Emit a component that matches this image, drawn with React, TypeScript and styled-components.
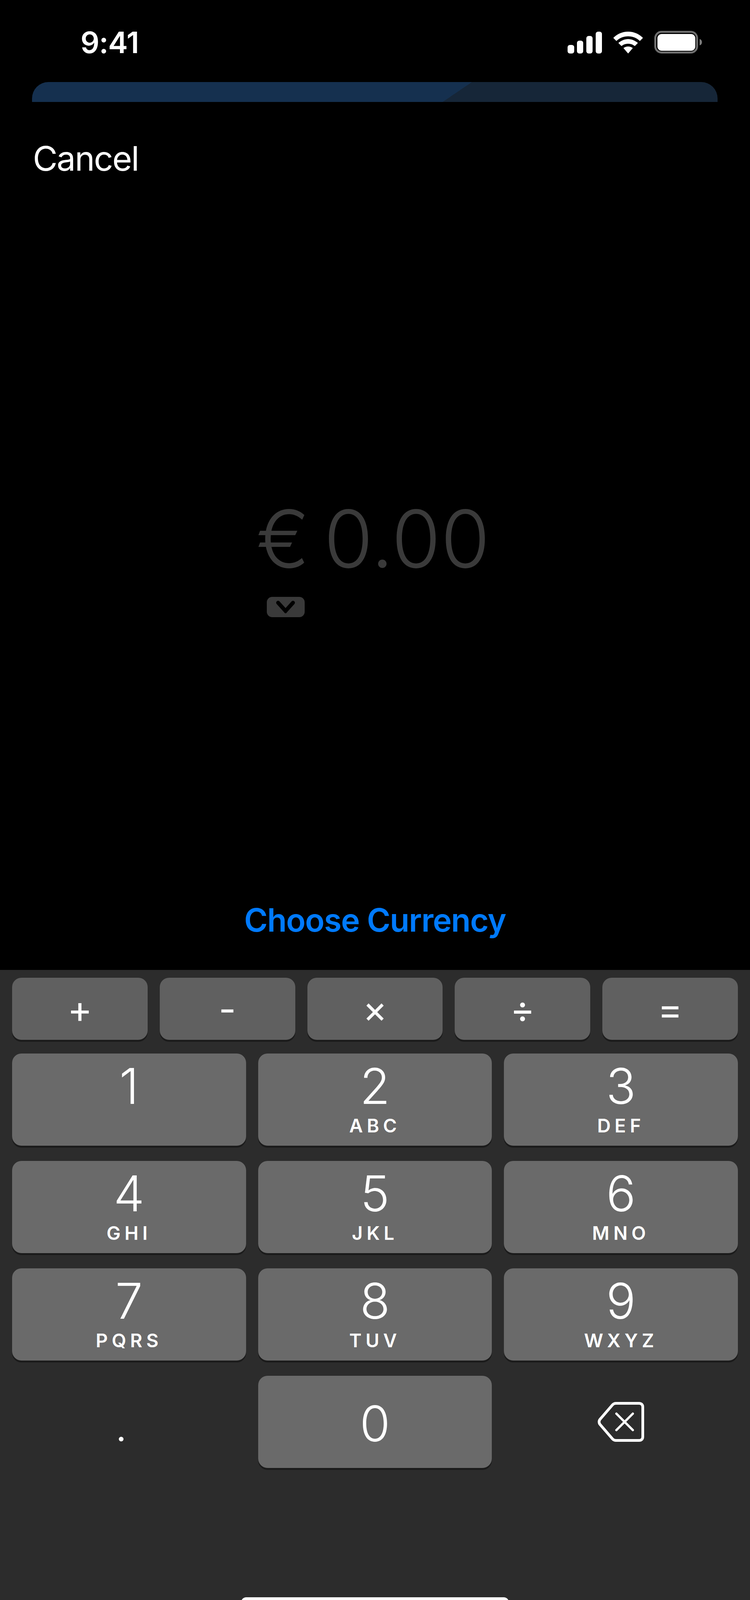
import React from "react";
import styled, { createGlobalStyle, css } from "styled-components";

const OPERATORS = ["+", "-", "×", "÷", "="];

const DIGITS = [
  { digit: "1", letters: "" },
  { digit: "2", letters: "ABC" },
  { digit: "3", letters: "DEF" },
  { digit: "4", letters: "GHI" },
  { digit: "5", letters: "JKL" },
  { digit: "6", letters: "MNO" },
  { digit: "7", letters: "PQRS" },
  { digit: "8", letters: "TUV" },
  { digit: "9", letters: "WXYZ" },
];

const App = () => {
  return (
    <Page>
      <GlobalStyle />
      <Top>
        <StatusBar>
          <Clock>9:41</Clock>
          <StatusIcons>
            <svg width="88" height="56" viewBox="0 0 88 56">
              <rect x="0" y="34" width="17" height="22" rx="6" fill="#fff" />
              <rect x="24" y="23" width="16" height="33" rx="6" fill="#fff" />
              <rect x="48" y="11" width="16" height="45" rx="6" fill="#fff" />
              <rect x="72" y="0" width="16" height="56" rx="6" fill="#fff" />
            </svg>
            <svg width="76" height="56" viewBox="0 0 76 56">
              <path d="M38 0C23 0 10 6 0 16l8 8c8-8 18-12 30-12s22 4 30 12l8-8C66 6 53 0 38 0Z" fill="#fff" />
              <path d="M38 19c-9 0-18 4-25 10l8 8c5-4 10-6 17-6s12 2 17 6l8-8c-7-6-16-10-25-10Z" fill="#fff" />
              <path d="M38 38c-5 0-9 2-12 4l12 14 12-14c-3-2-7-4-12-4Z" fill="#fff" />
            </svg>
            <svg width="122" height="58" viewBox="0 0 122 58">
              <rect x="2.5" y="2.5" width="107" height="53" rx="16" fill="none" stroke="#6f6f6f" strokeWidth="5" />
              <rect x="8" y="8" width="97" height="43" rx="11" fill="#fff" />
              <path d="M116 21c4 1 6 4 6 8s-2 7-6 8Z" fill="#7a7a7a" />
            </svg>
          </StatusIcons>
        </StatusBar>
        <Banner />
        <Cancel>Cancel</Cancel>
        <AmountArea>
          <Amount>
            <AmountValue>
              <Euro>€</Euro>
              <span>0.00</span>
            </AmountValue>
            <CurrencyPill>
              <svg width="50" height="32" viewBox="0 0 50 32">
                <path d="M6 5l19 21L44 5" fill="none" stroke="#000" strokeWidth="10" strokeLinecap="round" strokeLinejoin="miter" />
              </svg>
            </CurrencyPill>
          </Amount>
        </AmountArea>
        <ChooseCurrency>Choose Currency</ChooseCurrency>
      </Top>
      <Keypad>
        <OperatorRow>
          {OPERATORS.map((op) => (
            <OperatorKey key={op}>{op}</OperatorKey>
          ))}
        </OperatorRow>
        <DigitGrid>
          {DIGITS.map((item) => (
            <DigitKey key={item.digit}>
              <Digit>{item.digit}</Digit>
              <Letters>{item.letters}</Letters>
            </DigitKey>
          ))}
          <BareKey>
            <Dot>.</Dot>
          </BareKey>
          <DigitKey $centered>
            <Digit>0</Digit>
          </DigitKey>
          <BareKey>
            <svg width="119" height="102" viewBox="0 0 119 102">
              <path
                d="M47 3.5h59c6 0 9.500 3.500 9.500 9.500v76c0 6-3.500 9.500-9.500 9.500H47c-4 0-7-1.500-9.500-4.500L6 57.500c-3-3.500-3-9.500 0-13L37.500 8c2.500-3 5.500-4.500 9.500-4.500Z"
                fill="none"
                stroke="#fff"
                strokeWidth="7"
              />
              <path d="M48 30l42 42M90 30L48 72" fill="none" stroke="#fff" strokeWidth="6" strokeLinecap="round" />
            </svg>
          </BareKey>
        </DigitGrid>
        <HomeBar />
      </Keypad>
    </Page>
  );
};

export default App;

const GlobalStyle = createGlobalStyle`
  html, body {
    margin: 0;
    padding: 0;
    background: #000;
  }
`;

const Page = styled.div`
  width: 1920px;
  height: 4157px;
  display: flex;
  flex-direction: column;
  background: #000;
  color: #fff;
  font-family: Inter, "Liberation Sans", sans-serif;
`;

const Top = styled.div`
  height: 2483px;
  display: flex;
  flex-direction: column;
`;

const StatusBar = styled.div`
  height: 210px;
  box-sizing: border-box;
  padding: 79px 123px 0 206px;
  display: flex;
  justify-content: space-between;
  align-items: flex-start;
`;

const Clock = styled.div`
  font-size: 76px;
  font-weight: 600;
  line-height: 58px;
  letter-spacing: -1px;
`;

const StatusIcons = styled.div`
  display: flex;
  align-items: flex-start;
  gap: 29px;
  padding-top: 2px;

  svg {
    display: block;
  }
  svg:last-child {
    margin-top: -2px;
  }
`;

const Banner = styled.div`
  height: 51px;
  margin: 0 83px 0 82px;
  border-radius: 42px 42px 0 0;
  background: linear-gradient(145.8deg, #15304f 633px, #162638 633px);
`;

const Cancel = styled.div`
  margin: 92px 0 0 84px;
  font-size: 87px;
  line-height: 105px;
  font-weight: 400;
  letter-spacing: -2.5px;
`;

const AmountArea = styled.div`
  flex: 1;
  display: flex;
  justify-content: center;
  padding-top: 818px;
`;

const Amount = styled.div`
  display: flex;
  flex-direction: column;
  align-items: flex-start;
  transform: translateX(-5px);
`;

const AmountValue = styled.div`
  display: flex;
  align-items: center;
  height: 206px;
  color: #3a3a3a;
  font-size: 204px;
  font-weight: 300;
  line-height: 206px;
`;

const Euro = styled.span`
  margin-right: 36px;
`;

const CurrencyPill = styled.div`
  width: 97px;
  height: 52px;
  margin: 46px 0 0 27px;
  display: flex;
  align-items: center;
  justify-content: center;
  background: #3a3a3a;
  border-radius: 14px;
`;

const ChooseCurrency = styled.div`
  margin-bottom: 85px;
  text-align: center;
  color: #007aff;
  font-size: 82px;
  line-height: 84px;
  font-weight: 600;
  letter-spacing: -1.5px;
`;

const Keypad = styled.div`
  flex: 1;
  box-sizing: border-box;
  padding: 20px 31px 0;
  display: flex;
  flex-direction: column;
  background: #2c2c2c;
`;

const keyFace = css`
  border-radius: 24px;
  box-shadow: 0 5px 0 #1b1b1b;
  display: flex;
  align-items: center;
`;

const OperatorRow = styled.div`
  display: grid;
  grid-template-columns: repeat(5, 1fr);
  column-gap: 31px;
`;

const OperatorKey = styled.div`
  ${keyFace}
  height: 159px;
  justify-content: center;
  background: #606060;
  font-size: 96px;
  font-weight: 400;
  line-height: 1;
`;

const DigitGrid = styled.div`
  margin-top: 35px;
  display: grid;
  grid-template-columns: repeat(3, 1fr);
  grid-auto-rows: 236px;
  column-gap: 31px;
  row-gap: 39px;
`;

const DigitKey = styled.div<{ $centered?: boolean }>`
  ${keyFace}
  flex-direction: column;
  justify-content: ${(p) => (p.$centered ? "center" : "flex-start")};
  background: #6a6a6a;
`;

const BareKey = styled.div`
  display: flex;
  align-items: center;
  justify-content: center;
`;

const Digit = styled.div`
  font-size: 126px;
  font-weight: 300;
  line-height: 150px;
  margin-top: 8px;

  ${DigitKey}[data-centered] & {
    margin-top: 0;
  }
`;

const Letters = styled.div`
  font-size: 48px;
  font-weight: 600;
  line-height: 58px;
  letter-spacing: 10px;
  margin-top: -2px;
`;

const Dot = styled.div`
  font-size: 90px;
  line-height: 1;
  margin: 34px 40px 0 0;
`;

const HomeBar = styled.div`
  width: 686px;
  height: 27px;
  margin: auto auto 41px;
  border-radius: 14px;
  background: #fff;
`;
